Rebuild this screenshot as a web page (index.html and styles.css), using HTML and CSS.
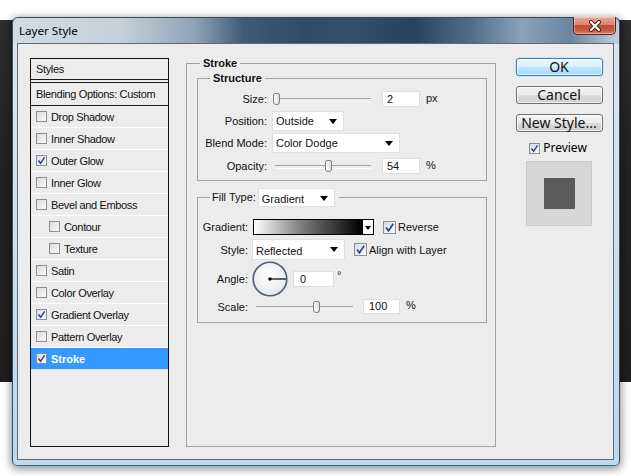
FILE: index.html
```html
<!DOCTYPE html>
<html>
<head>
<meta charset="utf-8">
<link rel="stylesheet" href="styles.css">
</head>
<body>
<div class="desktop">
  <div class="backdrop"></div>
  <div class="window">
    <div class="titlebar">
      <span class="title">Layer Style</span>
      <div class="close">
        <svg width="16" height="12" viewBox="0 0 16 12"><path d="M4 2 L12 10 M12 2 L4 10" stroke="#4a1510" stroke-width="4" stroke-linecap="round"/><path d="M4 2 L12 10 M12 2 L4 10" stroke="#fff" stroke-width="2.2" stroke-linecap="round"/></svg>
      </div>
    </div>
    <div class="client">
      <div class="styles-list">
        <div class="item head">Styles</div>
        <div class="item blend">Blending Options: Custom</div>
        <div class="item"><span class="cb"></span>Drop Shadow</div>
        <div class="item"><span class="cb"></span>Inner Shadow</div>
        <div class="item"><span class="cb on"><svg viewBox="0 0 11 11"><path d="M2.5 5.5 L4.6 8.3 L8.6 2.4" fill="none" stroke="#24478a" stroke-width="1.5"/></svg></span>Outer Glow</div>
        <div class="item"><span class="cb"></span>Inner Glow</div>
        <div class="item"><span class="cb"></span>Bevel and Emboss</div>
        <div class="item sub"><span class="cb"></span>Contour</div>
        <div class="item sub"><span class="cb"></span>Texture</div>
        <div class="item"><span class="cb"></span>Satin</div>
        <div class="item"><span class="cb"></span>Color Overlay</div>
        <div class="item"><span class="cb on"><svg viewBox="0 0 11 11"><path d="M2.5 5.5 L4.6 8.3 L8.6 2.4" fill="none" stroke="#24478a" stroke-width="1.5"/></svg></span>Gradient Overlay</div>
        <div class="item"><span class="cb"></span>Pattern Overlay</div>
        <div class="item selected"><span class="cb on"><svg viewBox="0 0 11 11"><path d="M2.5 5.5 L4.6 8.3 L8.6 2.4" fill="none" stroke="#24478a" stroke-width="1.5"/></svg></span>Stroke</div>
      </div>

      <fieldset class="group stroke">
        <legend class="bold-legend">Stroke</legend>

        <fieldset class="group structure">
          <legend class="bold-legend">Structure</legend>
          <div class="frow size-row">
            <span class="lbl s-lbl">Size:</span>
            <div class="slider s-slider"><span class="thumb" style="left:-2px"></span></div>
            <span class="num">2</span>
            <span class="unit">px</span>
          </div>
          <div class="frow pos-row">
            <span class="lbl s-lbl">Position:</span>
            <div class="select pos-select">Outside<span class="tri"></span></div>
          </div>
          <div class="frow blend-row">
            <span class="lbl s-lbl">Blend Mode:</span>
            <div class="select blend-select">Color Dodge<span class="tri"></span></div>
          </div>
          <div class="frow op-row">
            <span class="lbl s-lbl">Opacity:</span>
            <div class="slider s-slider"><span class="thumb" style="left:50px"></span></div>
            <span class="num">54</span>
            <span class="unit">%</span>
          </div>
        </fieldset>

        <fieldset class="group fill">
          <legend class="fill-legend"><span class="fill-lbl">Fill Type:</span><div class="select fill-select">Gradient<span class="tri"></span></div></legend>
          <div class="frow grad-row">
            <span class="lbl f-lbl">Gradient:</span>
            <div class="swatch"></div>
            <div class="swatch-btn"><span class="tri small"></span></div>
            <span class="cb big on rev"><svg viewBox="0 0 13 13"><path d="M3 6.5 L5.5 9.8 L10.2 2.8" fill="none" stroke="#24478a" stroke-width="1.7"/></svg></span>
            <span class="cb-text">Reverse</span>
          </div>
          <div class="frow style-row">
            <span class="lbl f-lbl">Style:</span>
            <div class="select style-select">Reflected<span class="tri"></span></div>
            <span class="cb big on align"><svg viewBox="0 0 13 13"><path d="M3 6.5 L5.5 9.8 L10.2 2.8" fill="none" stroke="#24478a" stroke-width="1.7"/></svg></span>
            <span class="cb-text">Align with Layer</span>
          </div>
          <div class="frow angle-row">
            <span class="lbl f-lbl">Angle:</span>
            <svg class="dial" width="36" height="36" viewBox="0 0 36 36">
              <defs><radialGradient id="dg" cx="0.45" cy="0.4" r="0.6"><stop offset="0" stop-color="#ffffff"/><stop offset="1" stop-color="#e6e8ec"/></radialGradient></defs>
              <circle cx="18" cy="18" r="16.8" fill="url(#dg)" stroke="#4e5f7a" stroke-width="1.6"/>
              <line x1="18" y1="18" x2="34" y2="18" stroke="#000" stroke-width="1.2"/>
              <circle cx="18" cy="18" r="1.7" fill="#000"/>
            </svg>
            <span class="num angle-num">0</span>
            <span class="deg">°</span>
          </div>
          <div class="frow scale-row">
            <span class="lbl f-lbl">Scale:</span>
            <div class="slider sc-slider"><span class="thumb" style="left:57px"></span></div>
            <span class="num sc-num">100</span>
            <span class="unit sc-unit">%</span>
          </div>
        </fieldset>
      </fieldset>

      <div class="actions">
        <div class="btn default">OK</div>
        <div class="btn">Cancel</div>
        <div class="btn">New Style...</div>
        <div class="preview-row">
          <span class="cb on pv"><svg viewBox="0 0 11 11"><path d="M2.5 5.5 L4.6 8.3 L8.6 2.4" fill="none" stroke="#24478a" stroke-width="1.5"/></svg></span>
          <span class="pv-text">Preview</span>
        </div>
        <div class="preview-box"><div class="preview-square"></div></div>
      </div>
    </div>
  </div>
</div>
</body>
</html>
```

FILE: styles.css
```css
* { box-sizing: border-box; }
html, body { margin: 0; padding: 0; }
body {
  width: 631px;
  height: 476px;
  overflow: hidden;
  background: #ffffff;
  font-family: "Liberation Sans", Arial, sans-serif;
  font-size: 11px;
  color: #111;
}
.desktop { position: relative; width: 631px; height: 476px; }
.backdrop {
  position: absolute;
  left: 0; top: 20px;
  width: 631px; height: 362px;
  background: linear-gradient(to bottom, #2c2c2c, #232323 40%, #1e1e1e);
}
.window {
  position: absolute;
  left: 12px; top: 17px;
  width: 608px; height: 449px;
  border: 1px solid #3c4a57;
  border-bottom-color: #2a6c84;
  border-radius: 6px 6px 5px 5px;
  padding: 0 5px 5px 4px;
  display: flex;
  flex-direction: column;
  background:
    linear-gradient(to right, #d3dbe2 0%, #c4d0da 18%, #8fa3b6 30%, #3f5b77 38%, #2e4b69 48%, #34506c 56%, #26425e 66%, #52708c 76%, #8aa2b8 84%, #6a86a0 92%, #c0d0de 100%) top / 100% 26px no-repeat,
    linear-gradient(to bottom, #dde5ec 0%, #cfdfeb 50%, #bcd9ee 100%);
  box-shadow: 0 2px 9px 1px rgba(0,0,0,0.45);
}
.titlebar {
  height: 25px;
  display: flex;
  justify-content: space-between;
  align-items: flex-start;
  flex: none;
}
.title {
  font-family: "Noto Sans", "Liberation Sans", sans-serif;
  font-size: 11.6px;
  color: #000;
  padding-left: 2px;
  line-height: 25px;
}
.close {
  width: 43px;
  height: 18px;
  margin-top: -1px;
  margin-right: -2px;
  border: 1px solid #5b2019;
  border-top: none;
  border-radius: 0 0 5px 5px;
  background: linear-gradient(to bottom, #e9a896 0%, #d8846f 45%, #c04a33 50%, #c75a40 80%, #de8a6a 100%);
  display: flex;
  align-items: center;
  justify-content: center;
  box-shadow: inset 0 0 0 1px rgba(255,255,255,0.35);
}
.close svg { display: block; }
.client {
  flex: 1;
  border: 1px solid #5d6a76;
  background: #ececec;
  display: flex;
  align-items: stretch;
  padding: 14px 10px 12px 12px;
}

/* styles list */
.styles-list {
  width: 139px;
  flex: none;
  border: 1px solid #111;
  background: #ececec;
}
.item {
  height: 22px;
  border-bottom: 1px solid #ffffff;
  display: flex;
  align-items: center;
  padding-left: 5px;
  letter-spacing: -0.35px;
  white-space: nowrap;
}
.item.head {
  height: 21px;
  border-bottom: 1px solid #1a1a1a;
}
.item.blend {
  margin-top: 2px;
  height: 24px;
  border-top: 1px solid #1a1a1a;
  border-bottom: 1px solid #1a1a1a;
}
.item.sub { padding-left: 18px; }
.item.selected {
  background: #3399ff;
  color: #fff;
  font-weight: bold;
  letter-spacing: 0;
  border-bottom-color: #d6e9fb;
}
.cb {
  width: 11px;
  height: 11px;
  flex: none;
  border: 1px solid #8c8f94;
  background: linear-gradient(135deg, #d9dadc 0%, #eeeeef 60%, #fafafa 100%);
  margin-right: 4px;
  position: relative;
}
.cb svg { position: absolute; left: -1px; top: -1px; width: 11px; height: 11px; }
.cb.big { width: 13px; height: 13px; }
.cb.big svg { width: 13px; height: 13px; }

/* group boxes */
.group {
  margin: 0;
  border: 1px solid #a2a2a2;
  min-width: 0;
}
.bold-legend {
  font-weight: bold;
  line-height: 12px;
  padding: 0 3px;
  margin-left: 3px;
}
.stroke {
  width: 310px;
  flex: none;
  margin-left: 17px;
  margin-top: -1px;
  padding: 0 8px 0 10px;
}
.structure {
  margin-top: 3px;
  padding: 6px 0 5px 0;
}
.structure .bold-legend { margin-left: 12px; }
.frow {
  display: flex;
  align-items: center;
  white-space: nowrap;
}
.lbl { text-align: right; flex: none; }
.s-lbl { width: 69px; margin-right: 5px; }
.f-lbl { width: 50px; margin-right: 4px; }
.size-row { height: 18px; }
.pos-row { height: 20px; margin-top: 3px; }
.blend-row { height: 20px; margin-top: 2px; }
.op-row { height: 18px; margin-top: 4px; }

.slider {
  position: relative;
  height: 14px;
  flex: none;
}
.slider::before {
  content: "";
  position: absolute;
  left: 0; right: 0; top: 6px;
  height: 2px;
  border-top: 1px solid #a4a4a4;
  border-bottom: 1px solid #fbfbfb;
}
.s-slider { width: 96px; margin-left: 3px; }
.sc-slider { width: 97px; margin-left: 4px; }
.thumb {
  position: absolute;
  top: 1px;
  width: 7px;
  height: 12px;
  border: 1px solid #7d8086;
  border-radius: 2px 2px 3px 3px;
  background: linear-gradient(to right, #fdfdfd, #dcdcdc);
}
.num {
  width: 38px;
  height: 16px;
  flex: none;
  background: #fff;
  border: 1px solid #dedede;
  padding-left: 4px;
  line-height: 14px;
  margin-left: 11px;
}
.unit { margin-left: 6px; margin-top: -3px; }

.select {
  position: relative;
  height: 20px;
  flex: none;
  background: #fff;
  border: 1px solid #e0e0e0;
  padding-left: 3px;
  line-height: 18px;
}
.tri {
  position: absolute;
  right: 6px;
  top: 7px;
  width: 0; height: 0;
  border-left: 4px solid transparent;
  border-right: 4px solid transparent;
  border-top: 5px solid #000;
}
.tri.small {
  right: 2px; top: 6px;
  border-left-width: 3px; border-right-width: 3px; border-top-width: 4px;
}
.pos-select { width: 72px; }
.blend-select { width: 128px; }

.fill {
  margin-top: 7px;
  padding: 0 0 8px 0;
}
.fill-legend {
  display: flex;
  align-items: center;
  margin-left: 12px;
  padding: 0 4px 0 2px;
  height: 19px;
}
.fill-lbl { margin-right: 2px; margin-top: -2px; }
.fill-select { width: 77px; height: 19px; padding-top: 1px; }
.grad-row { height: 16px; margin-top: 12px; }
.swatch {
  width: 110px;
  height: 16px;
  margin-left: 1px;
  border: 1px solid #000;
  background: linear-gradient(to right, #ffffff 0%, #7a7a7a 45%, #000 100%);
  flex: none;
}
.swatch-btn {
  position: relative;
  width: 11px;
  height: 16px;
  border: 1px solid #000;
  border-left: none;
  background: #fff;
  flex: none;
}
.cb-text { margin-left: 2px; }
.rev { margin-left: 9px; margin-right: 0; }
.style-row { height: 21px; margin-top: 4px; }
.style-select { width: 93px; height: 21px; line-height: 20px; padding-top: 1px; }
.align { margin-left: 9px; margin-right: 0; }
.angle-row { height: 36px; margin-top: 1px; }
.dial { flex: none; display: block; }
.angle-num { width: 41px; margin-left: 5px; padding-left: 6px; }
.deg { margin-left: 3px; margin-top: -8px; }
.scale-row { height: 15px; margin-top: 2px; }
.sc-num { width: 37px; height: 15px; margin-left: 10px; padding-left: 5px; line-height: 13px; }
.sc-unit { margin-left: 6px; }

/* actions */
.actions {
  width: 88px;
  flex: none;
  margin-left: 19px;
  display: flex;
  flex-direction: column;
  align-items: center;
  font-family: "Noto Sans", "Liberation Sans", sans-serif;
}
.btn {
  width: 87px;
  height: 18px;
  margin-bottom: 10px;
  border: 1px solid #707070;
  border-radius: 3px;
  background: linear-gradient(to bottom, #f3f3f3 0%, #ebebeb 48%, #dcdcdc 52%, #cfcfcf 100%);
  box-shadow: inset 0 0 0 1px rgba(255,255,255,0.7);
  font-size: 14px;
  line-height: 16px;
  text-align: center;
  color: #111;
  white-space: nowrap;
}
.btn.default {
  border-color: #3c7fb1;
  background: linear-gradient(to bottom, #eaf6fd 0%, #d9f0fc 48%, #bee6fd 52%, #a7d9f5 100%);
  box-shadow: inset 0 0 0 1px rgba(255,255,255,0.6), 0 0 2px #7fc8f0;
}
.preview-row {
  display: flex;
  align-items: center;
  height: 16px;
  margin-top: -2px;
  margin-right: 2px;
}
.pv { margin-right: 3px; }
.pv-text { font-size: 12px; line-height: 16px; color: #000; }
.preview-box {
  width: 66px;
  height: 65px;
  margin-top: 5px;
  background: #d7d7d7;
  border: 1px solid #cbcbcb;
  display: flex;
  align-items: center;
  justify-content: center;
}
.preview-square {
  width: 31px;
  height: 31px;
  background: #5a5a5a;
}
```
